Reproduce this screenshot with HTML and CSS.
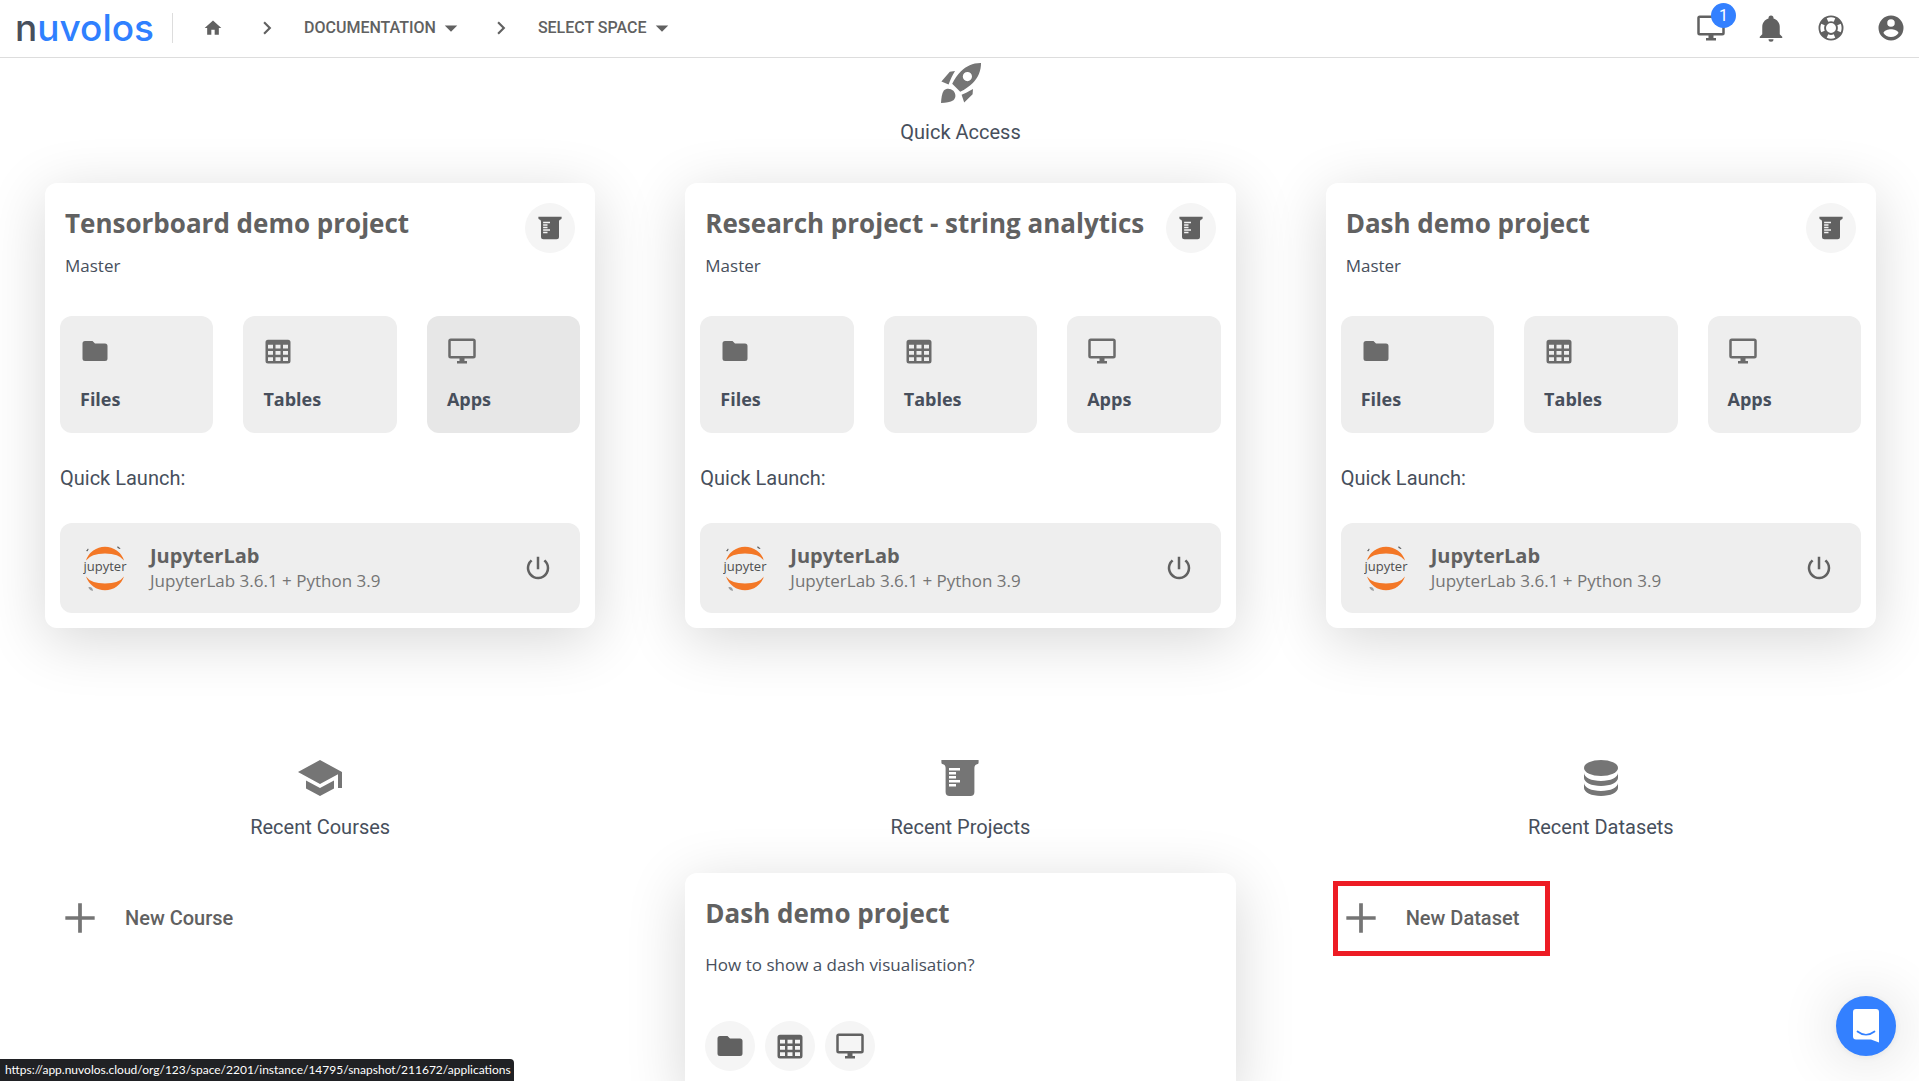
FILE: index.html
```html
<!DOCTYPE html>
<html lang="en">
<head>
<meta charset="utf-8">
<meta name="viewport" content="width=device-width, initial-scale=1">
<title>Nuvolos</title>
<link rel="stylesheet" href="styles.css">
</head>
<body>
<svg class="sprite" aria-hidden="true">
  <symbol id="home" viewBox="0 0 24 24"><path d="M10 20v-6h4v6h5v-8h3L12 3 2 12h3v8z"/></symbol>
  <symbol id="chevron" viewBox="0 0 24 24"><path d="M8.6 16.6L13.2 12 8.6 7.4 10 6l6 6-6 6z"/></symbol>
  <symbol id="caret" viewBox="0 0 24 24"><path d="M7 10l5 5 5-5z"/></symbol>
  <symbol id="monitor" viewBox="0 0 24 24"><path d="M21 16H3V4h18m0-2H3a2 2 0 0 0-2 2v12a2 2 0 0 0 2 2h7v2H8v2h8v-2h-2v-2h7a2 2 0 0 0 2-2V4a2 2 0 0 0-2-2z"/></symbol>
  <symbol id="bell" viewBox="0 0 24 24"><path d="M21 19v1H3v-1l2-2v-6c0-3.1 2-5.8 5-6.7V4a2 2 0 0 1 4 0v.3c3 .9 5 3.6 5 6.7v6l2 2m-7 2a2 2 0 0 1-4 0"/></symbol>
  <symbol id="lifebuoy" viewBox="0 0 24 24"><path d="M19.79 15.41c.95-2.17.95-4.65 0-6.83l-2.74 1.23c.6 1.38.6 2.99 0 4.37l2.74 1.23M15.42 4.21c-2.17-.95-4.66-.95-6.84 0l1.23 2.74c1.4-.6 2.99-.6 4.38 0l1.23-2.74M4.21 8.58c-.96 2.18-.96 4.67 0 6.84l2.74-1.24c-.6-1.39-.6-2.98 0-4.37L4.21 8.58m4.37 11.21c2.18.95 4.65.95 6.83 0l-1.23-2.74c-1.38.6-2.99.6-4.37 0l-1.23 2.74M12 2a10 10 0 1 1 0 20 10 10 0 0 1 0-20m0 6a4 4 0 1 0 0 8 4 4 0 0 0 0-8z"/></symbol>
  <symbol id="account" viewBox="0 0 24 24"><path d="M12 19.2c-2.5 0-4.71-1.28-6-3.2.03-2 4-3.1 6-3.1s5.97 1.1 6 3.1a7.23 7.23 0 0 1-6 3.2M12 5a3 3 0 1 1 0 6 3 3 0 0 1 0-6m0-3a10 10 0 1 0 0 20 10 10 0 0 0 0-20z"/></symbol>
  <symbol id="rocket" viewBox="0 0 24 24"><path fill-rule="evenodd" d="M22 2C18.2 1.9 14.6 3.5 12 6.1 10.2 7.9 8.8 10 7.6 12.4L11.6 16.4C14 15.2 16.1 13.8 17.9 12 20.5 9.4 22.1 5.800 22 2zM15.200 6.500a2.300 2.300 0 1 1 0 4.600 2.300 2.300 0 0 1 0-4.600zM9 6L6.400 6.400 2.200 11.200 5.800 12.700C6.700 10.300 7.700 8.200 9 6zM18 15C15.800 16.300 13.700 17.300 12.300 17.900L13.600 21.800 17.800 17.600zM3.400 15.800C2.400 17.300 2.200 19.500 2 22 4.500 21.800 6.700 21.600 8.200 20.600 9.600 19.400 9.500 17.400 8.200 15.900 6.700 14.600 4.700 14.500 3.400 15.800z"/></symbol>
  <symbol id="beaker" viewBox="0 0 24 24"><path fill-rule="evenodd" d="M2.700 3h18.600v1.200c0 .5-.3.800-.8.900-.9.200-1.300.9-1.300 1.900v12a2 2 0 0 1-2 2H6.800a2 2 0 0 1-2-2V7c0-1-.4-1.700-1.300-1.900C3 5 2.700 4.700 2.700 4.200zM6.500 7v1.200H12V7zM6.500 9v1.200h3.500V9zM6.500 11v1.200h3.500V11zM6.500 13v1.200H12V13zM6.500 15v1.200h3.500V15z"/></symbol>
  <symbol id="folder" viewBox="0 0 24 24"><path d="M10 4H4a2 2 0 0 0-2 2v12a2 2 0 0 0 2 2h16a2 2 0 0 0 2-2V8a2 2 0 0 0-2-2h-8z"/></symbol>
  <symbol id="table" viewBox="0 0 24 24"><path d="M4 3h16a2 2 0 0 1 2 2v15a2 2 0 0 1-2 2H4a2 2 0 0 1-2-2V5a2 2 0 0 1 2-2m0 4v3h4V7H4m6 0v3h4V7h-4m10 3V7h-4v3h4M4 12v3h4v-3H4m0 8h4v-3H4v3m6-8v3h4v-3h-4m0 8h4v-3h-4v3m10 0v-3h-4v3h4m0-8h-4v3h4z"/></symbol>
  <symbol id="power" viewBox="0 0 24 24"><path d="M13 3h-2v10h2zm4.830 2.170l-1.420 1.420A6.920 6.920 0 0 1 19 12a7 7 0 1 1-11.420-5.420L6.170 5.170A9 9 0 1 0 21 12c0-2.740-1.230-5.180-3.170-6.830z"/></symbol>
  <symbol id="school" viewBox="0 0 24 24"><path d="M12 3L1 9l11 6 9-4.900V17h2V9M5 13.200v4L12 21l7-3.800v-4L12 17z"/></symbol>
  <symbol id="database" viewBox="0 0 24 24"><ellipse cx="12" cy="7" rx="8.500" ry="4"/><path d="M3.500 9.500v2.500C3.500 14.200 7.300 16 12 16s8.500-1.800 8.500-4V9.500c0 2.200-3.800 4-8.500 4s-8.500-1.800-8.500-4zM3.500 14.500V17c0 2.200 3.800 4 8.500 4s8.500-1.800 8.500-4v-2.500c0 2.200-3.800 4-8.500 4s-8.500-1.800-8.500-4z"/></symbol>
  <symbol id="plus" viewBox="0 0 24 24"><path d="M10.600 1h2.800v9.600H23v2.800h-9.600V23h-2.800v-9.600H1v-2.800h9.600z"/></symbol>
  <symbol id="jupyter" viewBox="0 0 44 46">
    <path fill="#f37726" d="M3 15.500A20 20 0 0 1 41 15.500Q36 8.500 22 8.500T3 15.500zM3 31.500A20 20 0 0 0 41 31.500Q36 38.500 22 38.500T3 31.500z"/>
    <path fill="#616161" d="M3 6l2-2.500.6.800-1 2zM34 1.500l1.600.3 2 2-1 .3-2-1z"/><path fill="#9e9e9e" d="M5.500 42c2.500-.6 4.500 1 4.500 4-2-.2-4.500-2-4.500-4z"/>
    <text class="jupyter-word" x="22" y="26" text-anchor="middle">jupyter</text>
  </symbol>
</svg>

<div class="app">
  <header class="topbar">
    <a class="logo" href="#"><span class="logo-n">n</span>uvolos</a>
    <nav class="crumbs" aria-label="Breadcrumb">
      <a class="home" href="#" aria-label="Home"><svg class="icon-sm"><use href="#home"/></svg></a>
      <svg class="sep"><use href="#chevron"/></svg>
      <button class="crumb" type="button">DOCUMENTATION<svg class="caret"><use href="#caret"/></svg></button>
      <svg class="sep"><use href="#chevron"/></svg>
      <button class="crumb" type="button">SELECT SPACE<svg class="caret"><use href="#caret"/></svg></button>
    </nav>
    <div class="tools">
      <button class="tool" type="button" aria-label="Running apps"><svg class="icon"><use href="#monitor"/></svg><span class="badge">1</span></button>
      <button class="tool" type="button" aria-label="Notifications"><svg class="icon"><use href="#bell"/></svg></button>
      <button class="tool" type="button" aria-label="Help"><svg class="icon"><use href="#lifebuoy"/></svg></button>
      <button class="tool" type="button" aria-label="Account"><svg class="icon"><use href="#account"/></svg></button>
    </div>
  </header>

  <main class="content">
    <section class="quick">
      <div class="section-head"><svg class="icon-lg"><use href="#rocket"/></svg><h2>Quick Access</h2></div>
      <div class="columns">
        <article class="card">
          <div class="card-head">
            <div><h3>Tensorboard demo project</h3><p class="sub">Master</p></div>
            <button class="round" type="button" aria-label="Open project"><svg class="icon"><use href="#beaker"/></svg></button>
          </div>
          <div class="tiles">
            <a class="tile" href="#"><svg class="icon"><use href="#folder"/></svg>Files</a>
            <a class="tile" href="#"><svg class="icon"><use href="#table"/></svg>Tables</a>
            <a class="tile tile-active" href="#"><svg class="icon"><use href="#monitor"/></svg>Apps</a>
          </div>
          <p class="launch-label">Quick Launch:</p>
          <div class="launch">
            <svg class="jupyter"><use href="#jupyter"/></svg>
            <div class="launch-text"><h4>JupyterLab</h4><p>JupyterLab 3.6.1 + Python 3.9</p></div>
            <button class="power" type="button" aria-label="Start"><svg class="icon"><use href="#power"/></svg></button>
          </div>
        </article>
        <article class="card">
          <div class="card-head">
            <div><h3>Research project - string analytics</h3><p class="sub">Master</p></div>
            <button class="round" type="button" aria-label="Open project"><svg class="icon"><use href="#beaker"/></svg></button>
          </div>
          <div class="tiles">
            <a class="tile" href="#"><svg class="icon"><use href="#folder"/></svg>Files</a>
            <a class="tile" href="#"><svg class="icon"><use href="#table"/></svg>Tables</a>
            <a class="tile" href="#"><svg class="icon"><use href="#monitor"/></svg>Apps</a>
          </div>
          <p class="launch-label">Quick Launch:</p>
          <div class="launch">
            <svg class="jupyter"><use href="#jupyter"/></svg>
            <div class="launch-text"><h4>JupyterLab</h4><p>JupyterLab 3.6.1 + Python 3.9</p></div>
            <button class="power" type="button" aria-label="Start"><svg class="icon"><use href="#power"/></svg></button>
          </div>
        </article>
        <article class="card">
          <div class="card-head">
            <div><h3>Dash demo project</h3><p class="sub">Master</p></div>
            <button class="round" type="button" aria-label="Open project"><svg class="icon"><use href="#beaker"/></svg></button>
          </div>
          <div class="tiles">
            <a class="tile" href="#"><svg class="icon"><use href="#folder"/></svg>Files</a>
            <a class="tile" href="#"><svg class="icon"><use href="#table"/></svg>Tables</a>
            <a class="tile" href="#"><svg class="icon"><use href="#monitor"/></svg>Apps</a>
          </div>
          <p class="launch-label">Quick Launch:</p>
          <div class="launch">
            <svg class="jupyter"><use href="#jupyter"/></svg>
            <div class="launch-text"><h4>JupyterLab</h4><p>JupyterLab 3.6.1 + Python 3.9</p></div>
            <button class="power" type="button" aria-label="Start"><svg class="icon"><use href="#power"/></svg></button>
          </div>
        </article>
      </div>
    </section>

    <div class="columns recent">
      <section>
        <div class="section-head"><svg class="icon-lg"><use href="#school"/></svg><h2>Recent Courses</h2></div>
        <button class="new" type="button"><svg class="plus"><use href="#plus"/></svg>New Course</button>
      </section>
      <section>
        <div class="section-head"><svg class="icon-lg"><use href="#beaker"/></svg><h2>Recent Projects</h2></div>
        <article class="card">
          <div class="card-head"><div><h3>Dash demo project</h3><p class="sub sub-text">How to show a dash visualisation?</p></div></div>
          <div class="actions">
            <button class="round" type="button" aria-label="Files"><svg class="icon"><use href="#folder"/></svg></button>
            <button class="round" type="button" aria-label="Tables"><svg class="icon"><use href="#table"/></svg></button>
            <button class="round" type="button" aria-label="Apps"><svg class="icon"><use href="#monitor"/></svg></button>
          </div>
        </article>
      </section>
      <section>
        <div class="section-head"><svg class="icon-lg"><use href="#database"/></svg><h2>Recent Datasets</h2></div>
        <button class="new new-marked" type="button"><svg class="plus"><use href="#plus"/></svg>New Dataset</button>
      </section>
    </div>
  </main>

  <button class="chat" type="button" aria-label="Open chat">
    <svg class="chat-icon" viewBox="0 0 28 34"><path fill="#fff" d="M4 0h20a3 3 0 0 1 3 3v30.500L19 30.500H4a3 3 0 0 1-3-3V3a3 3 0 0 1 3-3z"/><path fill="none" stroke="#3380ff" stroke-width="1.700" stroke-linecap="round" d="M5.500 22.500q8.500 6.500 17 0"/></svg>
  </button>
  <div class="status">https://app.nuvolos.cloud/org/123/space/2201/instance/14795/snapshot/211672/applications</div>
</div>
</body>
</html>
```
FILE: styles.css
```css
* { box-sizing: border-box; }
body { margin: 0; background: #fff; color: #474f5c; font: 400 20px/24px Roboto, sans-serif; }
h2, h3, h4, p { margin: 0; font-weight: 400; }
button { border: 0; padding: 0; background: none; color: inherit; font: inherit; cursor: pointer; }
a { color: inherit; text-decoration: none; }
svg { display: block; fill: currentColor; flex: none; }

.sprite { display: none; }
.icon { width: 30px; height: 30px; }
.icon-lg { width: 48px; height: 48px; color: #757575; }

.app { position: relative; display: flex; flex-direction: column; height: calc(100vh - 7px); overflow: hidden; }

/* top bar */
.topbar { display: flex; align-items: center; flex: none; height: 58px; padding: 0 13px 2px 15px; border-bottom: 1px solid #ddd; color: #616161; background: #fff; z-index: 1; }
.logo { color: #2f80ff; font: 500 37px/48px Inter, sans-serif; }
.logo-n { color: #474f5c; }
.crumbs { display: flex; align-items: center; height: 30px; margin-left: 18px; padding-left: 30px; border-left: 1px solid #ddd; }
.icon-sm { width: 20px; height: 20px; }
.home { margin-right: 31px; }
.sep { width: 26px; height: 26px; margin-right: 24px; }
.crumb { display: flex; align-items: center; font-size: 16px; font-weight: 500; }
.crumb + .sep { margin-left: 22px; }
.caret { width: 30px; height: 30px; }
.tools { display: flex; gap: 30px; margin-left: auto; }
.tool { position: relative; }
.badge { position: absolute; top: -10px; right: -10px; width: 25px; height: 25px; border-radius: 50%; background: #3380ff; color: #fff; font-size: 16px; line-height: 25px; }

/* page */
.content { flex: 1; padding: 1px 43px 0 45px; }
.columns { display: grid; grid-template-columns: repeat(3, minmax(0, 1fr)); gap: 90px; }
.recent { margin-top: 126px; }
.section-head { display: flex; flex-direction: column; align-items: center; gap: 13px; }
.section-head h2 { font-size: 20px; line-height: 24px; }
.quick .section-head { margin-bottom: 39px; }
.recent .section-head { margin-bottom: 34px; }

/* cards */
.card { padding: 15px; border-radius: 12px; background: #fff; box-shadow: 0 12px 60px rgba(0, 0, 0, .16); }
.card-head { display: flex; justify-content: space-between; padding: 5px; }
.card-head h3 { margin-top: 2px; color: #616161; font: 700 26px/36px "Open Sans", sans-serif; }
.sub { margin-top: 13px; font: 400 17px/24px "Open Sans", sans-serif; }
.sub-text { margin-top: 22px; }
.round { display: grid; place-items: center; width: 50px; height: 50px; border-radius: 50%; background: #f5f5f5; color: #616161; }
.actions { display: flex; gap: 10px; padding: 39px 5px 9px; }

.tiles { display: grid; grid-template-columns: repeat(3, 1fr); gap: 30px; margin-top: 33px; }
.tile { padding: 20px 20px 22px; border-radius: 12px; background: #eee; font: 700 18px/24px "Open Sans", sans-serif; }
.tile .icon { margin-bottom: 21px; color: #6b6b6b; }
.tile-active { background: #e7e7e7; }

.launch-label { margin: 33px 0; }
.launch { display: flex; align-items: center; height: 90px; padding: 0 27px 0 23px; border-radius: 12px; background: #eee; color: #616161; }
.jupyter { width: 44px; height: 46px; }
.jupyter-word { fill: #4e4e4e; font: 400 13px "Open Sans", sans-serif; }
.launch-text { flex: 1; margin-left: 23px; }
.launch-text h4 { font: 700 20px/26px "Open Sans", sans-serif; }
.launch-text p { color: #757575; font: 400 17px/24px "Open Sans", sans-serif; }

.new { display: flex; align-items: center; gap: 29px; height: 75px; margin-top: 42px; padding: 0 26px 2px 19px; color: #616161; font-weight: 500; }
.new-marked { margin-left: 7px; padding-left: 7px; border: 5px solid #ed1c24; }
.plus { width: 32px; height: 32px; color: #757575; }
.recent .section-head:has(+ .new) { margin-bottom: 0; }

/* overlays */
.chat { position: absolute; right: 23px; bottom: 25px; display: grid; place-items: center; width: 60px; height: 60px; border-radius: 50%; background: #3380ff; box-shadow: 0 2px 60px rgba(0, 0, 0, .16), 0 1px 6px rgba(0, 0, 0, .06); }
.chat-icon { width: 28px; height: 34px; }
.status { position: absolute; left: 0; bottom: 0; padding: 0 3px 0 5px; border-radius: 0 4px 0 0; background: #202124; color: #fff; font: 400 12px/22px Lato, sans-serif; }
```
